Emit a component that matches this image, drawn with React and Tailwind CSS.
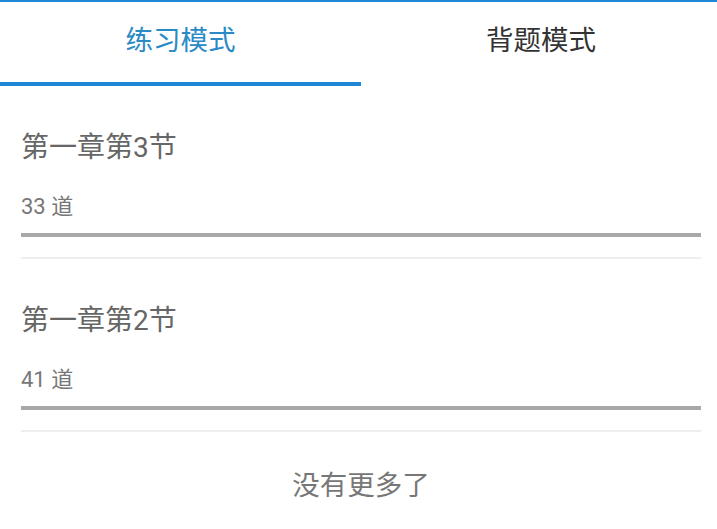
import { useState } from "react";

// Chapter list shown under the practice/recite tabs
const chapters = [
  { title: "第一章第3节", count: 33 },
  { title: "第一章第2节", count: 41 },
];

export default function App() {
  // Which tab is active: 0 = practice, 1 = recite
  const [tab, setTab] = useState(0);

  return (
    <div
      className="min-h-screen bg-white border-t-2 border-[#1e88d6]"
      style={{ fontFamily: 'Roboto, "Noto Sans CJK SC", sans-serif' }}
    >
      {/* Tabs */}
      <div className="flex">
        {["练习模式", "背题模式"].map((label, i) => (
          <button
            key={label}
            onClick={() => setTab(i)}
            className={
              i === 0
                ? "w-[361px] h-[84px] flex items-center justify-center text-[27.5px] pb-[2px] border-b-4 " +
                  (tab === 0 ? "text-[#2a8ac6] border-[#1e88d6]" : "text-[#333] border-transparent")
                : "flex-1 h-[84px] flex items-center justify-center text-[27.5px] pb-[2px] pl-[4px] border-b-4 " +
                  (tab === 1 ? "text-[#2a8ac6] border-[#1e88d6]" : "text-[#333] border-transparent")
            }
          >
            {label}
          </button>
        ))}
      </div>

      {/* Chapter list */}
      <div className="pl-[21px] pr-[16px]">
        {chapters.map((c) => (
          <div key={c.title} className="pt-[46px]">
            <div className="text-[28px] leading-[32px] text-[#666]">{c.title}</div>
            <div className="mt-[30px] text-[22px] leading-[26px] text-[#777]">{c.count} 道</div>
            <div className="mt-[13px] h-[4px] bg-[#a8a8a8]" />
            <div className="mt-[20px] h-[2px] bg-[#eeeeee]" />
          </div>
        ))}

        {/* Footer hint */}
        <div className="mt-[38px] text-center text-[27.5px] leading-[32px] text-[#777]">没有更多了</div>
      </div>
    </div>
  );
}
